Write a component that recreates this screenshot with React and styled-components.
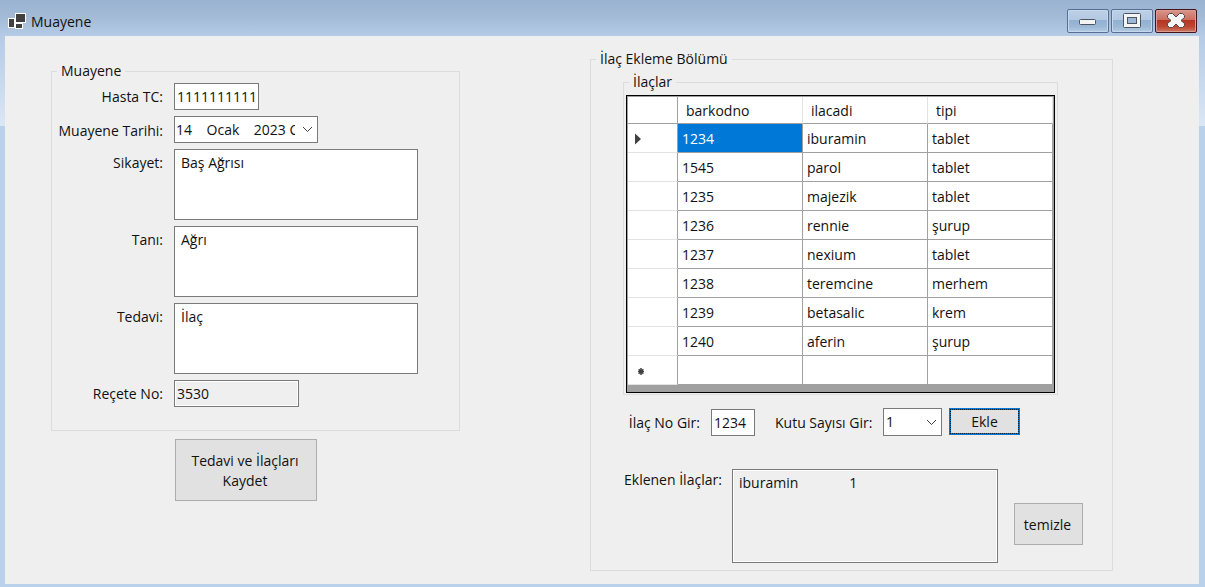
import React, { useState } from "react";
import styled, { createGlobalStyle } from "styled-components";

const GlobalStyle = createGlobalStyle`
  *, *::before, *::after { box-sizing: border-box; }
  body {
    margin: 0;
    color: #111;
    font: 14px/20px "Open Sans", "Noto Sans", sans-serif;
  }
  button, input, select, textarea { font: inherit; color: inherit; margin: 0; border-radius: 0; outline: 0; }
`;

const Window = styled.main`
  display: flex;
  flex-direction: column;
  min-height: 100vh;
  padding: 0 6px 3px 5px;
  background: linear-gradient(#99b3d0 0, #a2bad6 16px, #b5cbe6 36px, #bed2ea 60px, #dbe7f5 126px, #b9d1ea 126px);
`;

const TitleBar = styled.header`
  display: flex;
  align-items: center;
  gap: 5px;
  height: 36px;
  padding: 6px 2px 0 3px;
`;

const Title = styled.h1`
  flex: 1;
  margin: 0;
  padding-top: 2px;
  font-size: 14px;
  font-weight: 400;
`;

const Controls = styled.div`
  display: flex;
  gap: 2px;
`;

const ControlButton = styled.button`
  display: grid;
  place-items: center;
  width: 42px;
  height: 24px;
  padding: 0;
  border: 1px solid ${(p) => (p.$close ? "#43141a" : "#566f92")};
  border-radius: 2px;
  box-shadow: inset 0 0 0 1px ${(p) => (p.$close ? "#dc9c92" : "#c5d8ec")};
  background: ${(p) =>
    p.$close
      ? "linear-gradient(#d9958a 0, #cc6e60 45%, #b53420 46%, #bd4631 75%, #cf7a62 100%)"
      : "linear-gradient(#bcd0e6 0, #b3c9e2 45%, #92b0d1 46%, #9cb8d6 75%, #b4cce5 100%)"};
`;

const Client = styled.div`
  flex: 1;
  display: grid;
  grid-template-columns: minmax(0, 409fr) minmax(0, 523fr);
  align-items: start;
  gap: 130px;
  padding: 13px 86px 13px 46px;
  background: #efefef;
`;

const LeftColumn = styled.div`
  padding-top: 12px;
`;

const Group = styled.fieldset`
  min-width: 0;
  margin: 0;
  padding: 0;
  border: 1px solid #dcdcdc;
`;

const GroupTitle = styled.legend`
  margin-left: 5px;
  padding: 0 4px;
`;

const ExamFields = styled.div`
  display: grid;
  grid-template-columns: 111px minmax(0, 1fr);
  column-gap: 11px;
  row-gap: 6px;
  padding: 2px 41px 23px 0;
`;

const Label = styled.label`
  flex: none;
  width: ${(p) => p.$width || "auto"};
  padding-top: ${(p) => p.$top || "4px"};
  text-align: right;
  white-space: nowrap;
`;

const TextInput = styled.input`
  display: block;
  width: ${(p) => p.$width};
  height: 27px;
  padding: 0 2px;
  border: 1px solid #7a7a7a;
  background: ${(p) => (p.readOnly ? "#efefef" : "#fff")};
  box-shadow: inset 0 0 0 1px #fff;
`;

const TextArea = styled.textarea`
  display: block;
  width: ${(p) => p.$width || "100%"};
  height: ${(p) => p.$height || "71px"};
  padding: 3px 6px;
  border: 1px solid #7a7a7a;
  background: ${(p) => (p.readOnly ? "#efefef" : "#fff")};
  box-shadow: inset 0 0 0 1px #fff;
  resize: none;
`;

const DatePicker = styled.div`
  display: flex;
  width: 144px;
  height: 27px;
  border: 1px solid #7a7a7a;
  background: #fff;
`;

const DateInput = styled.input`
  flex: 1;
  min-width: 0;
  padding: 0;
  margin: 0 3px 0 1px;
  border: 0;
  background: none;
`;

const DropButton = styled.button`
  display: grid;
  place-items: center;
  width: 19px;
  padding: 0;
  border: 0;
  background: none;
`;

const SelectBox = styled.div`
  display: grid;
  grid-template-columns: minmax(0, 1fr) 19px;
  align-items: center;
  width: 59px;
  height: 28px;
  border: 1px solid #7a7a7a;
  background: #fff;

  select {
    grid-area: 1 / 1 / 2 / 3;
    width: 100%;
    height: 26px;
    padding: 0 2px;
    border: 0;
    background: none;
    appearance: none;
  }

  svg {
    grid-area: 1 / 2;
    justify-self: center;
    pointer-events: none;
  }
`;

const Button = styled.button`
  flex: none;
  display: block;
  width: ${(p) => p.$width};
  height: ${(p) => p.$height};
  padding: 2px 2px 0 0;
  border: 1px solid #adadad;
  background: #e1e1e1;
`;

const DefaultButton = styled(Button)`
  padding: 0;
  border: 2px solid #0078d7;
  outline: 1px dotted #102030;
  outline-offset: -2px;
`;

const SaveRow = styled.div`
  padding: 8px 0 0 124px;
`;

const AddFields = styled.div`
  padding: 3px 29px 7px 32px;
`;

const MedicineGroup = styled(Group)`
  margin-right: 25px;
`;

const Grid = styled.div`
  margin: 3px 2px 1px;
  padding: 1px 1px 7px;
  border: 1px solid #000;
  background: #a0a0a0;
`;

const Table = styled.table`
  width: 100%;
  table-layout: fixed;
  border-collapse: separate;
  border-spacing: 0;
  background: #fff;
`;

const ColumnHeader = styled.th`
  height: 27px;
  padding: 2px 8px 0;
  border-right: 1px solid #e3e3e3;
  border-bottom: 1px solid #a0a0a0;
  font-weight: 400;
  text-align: left;
`;

const RowHeader = styled.th`
  width: 50px;
  height: ${(p) => (p.$corner ? "27px" : "29px")};
  padding: 2px 0 0 7px;
  border-right: 1px solid #a0a0a0;
  border-bottom: 1px solid ${(p) => (p.$corner ? "#a0a0a0" : "#e3e3e3")};
  text-align: left;

  svg { display: block; }
`;

const Cell = styled.td`
  height: 29px;
  padding: 2px 4px 0;
  border-right: 1px solid #a0a0a0;
  border-bottom: 1px solid #a0a0a0;
  color: ${(p) => (p.$selected ? "#fff" : "inherit")};
  background: ${(p) => (p.$selected ? "#0078d7" : "#fff")};
`;

const AddRow = styled.div`
  display: flex;
  align-items: flex-start;
  padding: 13px 0 0 1px;
`;

const FieldGap = styled.div`
  align-self: flex-end;
  margin: 0 ${(p) => p.$after} 0 11px;
`;

const AddedRow = styled.div`
  display: flex;
  align-items: flex-start;
  gap: 11px;
  padding: 33px 0 0 1px;
`;

const ClearSlot = styled.div`
  align-self: center;
  margin-left: auto;
  padding-top: 16px;
`;

const Chevron = () => (
  <svg width="11" height="7" viewBox="0 0 11 7" fill="none" stroke="#444" aria-hidden="true">
    <path d="M1 1l4.5 4.5L10 1" />
  </svg>
);

const AppIcon = () => (
  <svg width="18" height="16" viewBox="0 0 18 16" aria-hidden="true">
    <path d="M0 5h7V0h11v10h-3v6H7v-1H0z" fill="#fff" />
    <path d="M1 6h5v8H1zM8 1h9v8H8zM8 11h6v4H8z" fill="#404040" />
  </svg>
);

const MinimizeIcon = () => (
  <svg width="18" height="16" viewBox="0 0 18 16" aria-hidden="true">
    <rect x="0.5" y="6.5" width="16" height="5" rx="1" fill="#f4f4f4" stroke="#4b5663" />
  </svg>
);

const MaximizeIcon = () => (
  <svg width="18" height="16" viewBox="0 0 18 16" stroke="#4b5663" aria-hidden="true">
    <rect x="0.5" y="0.5" width="17" height="14" rx="1" fill="#f4f4f4" />
    <rect x="4.5" y="4.5" width="9" height="6" fill="#9db8d6" />
  </svg>
);

const CloseIcon = () => (
  <svg width="18" height="16" viewBox="0 0 18 16" aria-hidden="true">
    <path
      d="M.5 2.5l2-2h3L9 4 12.5.5h3l2 2v2l-3.500 3 3.500 3v2l-2 2h-3L9 11l-3.500 3.500h-3l-2-2v-2l3.500-3-3.500-3z"
      fill="#f4f4f4"
      stroke="#50474b"
      strokeLinejoin="round"
    />
  </svg>
);

const CurrentRowMark = () => (
  <svg width="12" height="12" viewBox="0 0 12 12" aria-hidden="true">
    <path d="M0 0.500L6 6 0 11.500z" fill="#404040" />
  </svg>
);

const NewRowMark = () => (
  <svg width="12" height="12" viewBox="0 0 12 12" stroke="#404040" strokeWidth="1.500" aria-hidden="true">
    <path d="M6 3v7M3 6.500h6M3.700 4.200l4.600 4.600M8.300 4.200L3.700 8.800" />
  </svg>
);

const medicines = [
  ["1234", "iburamin", "tablet"],
  ["1545", "parol", "tablet"],
  ["1235", "majezik", "tablet"],
  ["1236", "rennie", "şurup"],
  ["1237", "nexium", "tablet"],
  ["1238", "teremcine", "merhem"],
  ["1239", "betasalic", "krem"],
  ["1240", "aferin", "şurup"],
];

function MedicineTable() {
  const [selected, setSelected] = useState("0-0");
  const current = Number(selected.split("-")[0]);
  return (
    <Grid>
      <Table>
        <thead>
          <tr>
            <RowHeader $corner />
            {["barkodno", "ilacadi", "tipi"].map((name) => (
              <ColumnHeader key={name} scope="col">{name}</ColumnHeader>
            ))}
          </tr>
        </thead>
        <tbody>
          {medicines.map((row, r) => (
            <tr key={row[0]}>
              <RowHeader scope="row">{current === r && <CurrentRowMark />}</RowHeader>
              {row.map((value, c) => (
                <Cell key={c} $selected={selected === `${r}-${c}`} onClick={() => setSelected(`${r}-${c}`)}>
                  {value}
                </Cell>
              ))}
            </tr>
          ))}
          <tr>
            <RowHeader scope="row"><NewRowMark /></RowHeader>
            <Cell />
            <Cell />
            <Cell />
          </tr>
        </tbody>
      </Table>
    </Grid>
  );
}

export default function App() {
  const [added, setAdded] = useState("iburamin" + " ".repeat(14) + "1");
  return (
    <Window>
      <GlobalStyle />
      <TitleBar>
        <AppIcon />
        <Title>Muayene</Title>
        <Controls>
          <ControlButton type="button" aria-label="Simge durumuna küçült"><MinimizeIcon /></ControlButton>
          <ControlButton type="button" aria-label="Ekranı kapla"><MaximizeIcon /></ControlButton>
          <ControlButton type="button" aria-label="Kapat" $close><CloseIcon /></ControlButton>
        </Controls>
      </TitleBar>
      <Client>
        <LeftColumn>
          <Group>
            <GroupTitle>Muayene</GroupTitle>
            <ExamFields>
              <Label htmlFor="tc">Hasta TC:</Label>
              <TextInput id="tc" $width="85px" defaultValue="1111111111" />
              <Label htmlFor="date" $top="5px">Muayene Tarihi:</Label>
              <DatePicker>
                <DateInput id="date" defaultValue="14    Ocak    2023 Cumartesi" />
                <DropButton type="button" aria-label="Takvimi aç"><Chevron /></DropButton>
              </DatePicker>
              <Label htmlFor="complaint">Sikayet:</Label>
              <TextArea id="complaint" defaultValue="Baş Ağrısı" spellCheck={false} />
              <Label htmlFor="diagnosis">Tanı:</Label>
              <TextArea id="diagnosis" defaultValue="Ağrı" spellCheck={false} />
              <Label htmlFor="treatment">Tedavi:</Label>
              <TextArea id="treatment" defaultValue="İlaç" spellCheck={false} />
              <Label htmlFor="prescription">Reçete No:</Label>
              <TextInput id="prescription" $width="125px" value="3530" readOnly />
            </ExamFields>
          </Group>
          <SaveRow>
            <Button type="button" $width="142px" $height="62px">
              Tedavi ve İlaçları
              <br />
              Kaydet
            </Button>
          </SaveRow>
        </LeftColumn>
        <Group>
          <GroupTitle>İlaç Ekleme Bölümü</GroupTitle>
          <AddFields>
            <MedicineGroup>
              <GroupTitle>İlaçlar</GroupTitle>
              <MedicineTable />
            </MedicineGroup>
            <AddRow>
              <Label htmlFor="code" $width="76px" $top="5px">İlaç No Gir:</Label>
              <FieldGap $after="20px">
                <TextInput id="code" $width="44px" defaultValue="1234" />
              </FieldGap>
              <Label htmlFor="count" $width="97px" $top="5px">Kutu Sayısı Gir:</Label>
              <FieldGap $after="7px">
                <SelectBox>
                  <select id="count" defaultValue="1">
                    <option>1</option>
                    <option>2</option>
                    <option>3</option>
                  </select>
                  <Chevron />
                </SelectBox>
              </FieldGap>
              <DefaultButton type="button" $width="71px" $height="27px">Ekle</DefaultButton>
            </AddRow>
            <AddedRow>
              <Label htmlFor="added" $width="97px" $top="1px">Eklenen İlaçlar:</Label>
              <TextArea id="added" $width="266px" $height="94px" value={added} readOnly />
              <ClearSlot>
                <Button type="button" $width="69px" $height="42px" onClick={() => setAdded("")}>temizle</Button>
              </ClearSlot>
            </AddedRow>
          </AddFields>
        </Group>
      </Client>
    </Window>
  );
}
